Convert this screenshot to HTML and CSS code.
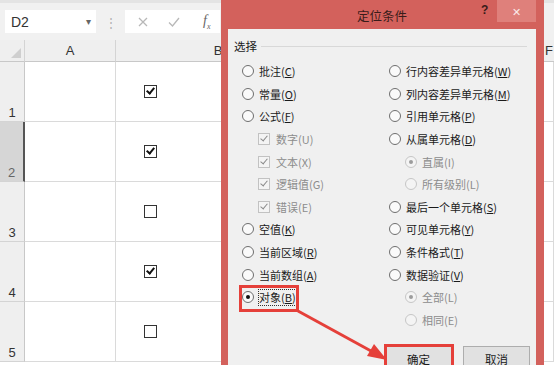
FILE: index.html
```html
<!DOCTYPE html>
<html lang="zh-CN">
<head>
    <meta charset="UTF-8">
    <title>定位条件</title>
    <link rel="stylesheet" href="styles.css">
</head>
<body>
    <div class="sheet">
      <div class="formula-bar">
        <div class="name-box"><span>D2</span><span class="caret">&#9662;</span></div>
        <div class="grip">&#8942;</div>
        <div class="fx-box">
          <svg width="12" height="12" viewBox="0 0 12 12"><path d="M2 2L10 10M10 2L2 10" stroke="#b8b8b8" stroke-width="1.3" fill="none"/></svg>
          <svg width="14" height="12" viewBox="0 0 14 12"><path d="M2 6.5L5.5 10L12 2" stroke="#b8b8b8" stroke-width="1.3" fill="none"/></svg>
          <span class="fx">f<sub>x</sub></span>
        </div>
      </div>

      <div class="grid">
        <div class="corner"><span class="tri"></span></div>
        <div class="col-head">A</div>
        <div class="col-head">B</div>
        <div class="col-head last">F</div>

        <div class="row-head">1</div><div class="cell"></div><div class="cell box-cell"><span class="cbx on"></span></div><div class="cell"></div>
        <div class="row-head sel">2</div><div class="cell"></div><div class="cell box-cell"><span class="cbx on"></span></div><div class="cell"></div>
        <div class="row-head">3</div><div class="cell"></div><div class="cell box-cell"><span class="cbx"></span></div><div class="cell"></div>
        <div class="row-head">4</div><div class="cell"></div><div class="cell box-cell"><span class="cbx on"></span></div><div class="cell"></div>
        <div class="row-head">5</div><div class="cell"></div><div class="cell box-cell"><span class="cbx"></span></div><div class="cell"></div>
      </div>
    </div>

    <div class="dialog">
      <div class="title-bar">
        <span class="title">定位条件</span>
        <span class="help">?</span>
        <span class="close">&#10005;</span>
      </div>
      <div class="dlg-body">
        <div class="legend"><span>选择</span><span class="rule"></span></div>

        <div class="options">
          <div class="opt"><span class="radio"></span><span>批注(<u>C</u>)</span></div>
          <div class="opt"><span class="radio"></span><span>行内容差异单元格(<u>W</u>)</span></div>

          <div class="opt"><span class="radio"></span><span>常量(<u>O</u>)</span></div>
          <div class="opt"><span class="radio"></span><span>列内容差异单元格(<u>M</u>)</span></div>

          <div class="opt"><span class="radio"></span><span>公式(<u>F</u>)</span></div>
          <div class="opt"><span class="radio"></span><span>引用单元格(<u>P</u>)</span></div>

          <div class="opt sub off"><span class="chk"></span><span>数字(U)</span></div>
          <div class="opt"><span class="radio"></span><span>从属单元格(<u>D</u>)</span></div>

          <div class="opt sub off"><span class="chk"></span><span>文本(X)</span></div>
          <div class="opt sub off"><span class="radio dot"></span><span>直属(I)</span></div>

          <div class="opt sub off"><span class="chk"></span><span>逻辑值(G)</span></div>
          <div class="opt sub off"><span class="radio"></span><span>所有级别(L)</span></div>

          <div class="opt sub off"><span class="chk"></span><span>错误(E)</span></div>
          <div class="opt"><span class="radio"></span><span>最后一个单元格(<u>S</u>)</span></div>

          <div class="opt"><span class="radio"></span><span>空值(<u>K</u>)</span></div>
          <div class="opt"><span class="radio"></span><span>可见单元格(<u>Y</u>)</span></div>

          <div class="opt"><span class="radio"></span><span>当前区域(<u>R</u>)</span></div>
          <div class="opt"><span class="radio"></span><span>条件格式(<u>T</u>)</span></div>

          <div class="opt"><span class="radio"></span><span>当前数组(<u>A</u>)</span></div>
          <div class="opt"><span class="radio"></span><span>数据验证(<u>V</u>)</span></div>

          <div class="opt"><span class="radio picked"></span><span class="focus">对象(<u>B</u>)</span></div>
          <div class="opt sub off"><span class="radio dot"></span><span>全部(L)</span></div>

          <div class="opt"></div>
          <div class="opt sub off"><span class="radio"></span><span>相同(E)</span></div>
        </div>

        <div class="buttons">
          <button class="btn">确定</button>
          <button class="btn">取消</button>
        </div>
      </div>
    </div>

    <!-- red annotation drawn over the screenshot -->
    <div class="mark mark-obj"></div>
    <div class="mark mark-ok"></div>
    <svg class="arrow" width="554" height="365" viewBox="0 0 554 365">
      <line x1="298" y1="311" x2="371" y2="351" stroke="#e5403a" stroke-width="3"/>
      <polygon points="387,360 367,356 374,344" fill="#e5403a"/>
    </svg>
</body>
</html>
```

FILE: styles.css
```css
body {
  margin: 0;
  width: 554px;
  height: 365px;
  overflow: hidden;
  position: relative;
  font-family: "Noto Sans CJK SC", "Liberation Sans", sans-serif;
  background: #fff;
}

/* ---- worksheet ---- */

.formula-bar {
  height: 40px;
  display: flex;
  align-items: center;
  background: #f1f1f1;
  border-top: 3px solid #e4e4e4;
  box-sizing: border-box;
  padding: 0 0 0 5px;
}

.name-box {
  width: 91px;
  height: 23px;
  background: #fff;
  display: flex;
  align-items: center;
  justify-content: space-between;
  padding: 0 5px 0 6px;
  box-sizing: border-box;
  font-family: "Liberation Sans", sans-serif;
  font-size: 14px;
  color: #333;
}

.caret {
  font-size: 10px;
  color: #666;
}

.grip {
  width: 29px;
  text-align: center;
  color: #b0b0b0;
  font-size: 12px;
}

.fx-box {
  width: 95px;
  height: 23px;
  background: #fff;
  display: flex;
  align-items: center;
  gap: 18px;
  padding-left: 12px;
  box-sizing: border-box;
}

.fx {
  font-family: "Liberation Serif", serif;
  font-style: italic;
  font-size: 14px;
  color: #666;
  margin-left: 4px;
}

.fx sub {
  font-size: 8px;
}

.grid {
  display: grid;
  grid-template-columns: 25px 91px 205px 1fr;
  grid-template-rows: 22px repeat(5, 60px);
}

.corner,
.col-head {
  background: #efefef;
  border-right: 1px solid #d4d4d4;
  border-bottom: 1px solid #c8c8c8;
  box-sizing: border-box;
}

.corner {
  position: relative;
}

.tri {
  position: absolute;
  right: 3px;
  bottom: 3px;
  width: 0;
  height: 0;
  border-left: 10px solid transparent;
  border-bottom: 10px solid #cfcfcf;
}

.col-head {
  font-family: "Liberation Sans", sans-serif;
  font-size: 13px;
  color: #333;
  display: flex;
  align-items: center;
  justify-content: center;
}

.col-head.last {
  justify-content: flex-end;
  padding-right: 1px;
  border-right: none;
}

.row-head {
  background: #efefef;
  border-right: 1px solid #c8c8c8;
  border-bottom: 1px solid #d4d4d4;
  box-sizing: border-box;
  display: flex;
  align-items: flex-end;
  justify-content: center;
  font-family: "Liberation Sans", sans-serif;
  font-size: 13px;
  color: #333;
  padding-bottom: 1px;
}

.row-head.sel {
  background: #d6d6d6;
  border-right: 2px solid #555;
  color: #666;
}

.cell {
  border-right: 1px solid #dadada;
  border-bottom: 1px solid #dadada;
  box-sizing: border-box;
}

.box-cell {
  display: flex;
  align-items: center;
  padding-left: 28px;
}

.cbx {
  width: 11px;
  height: 11px;
  border: 1px solid #333;
  background: #fff;
  position: relative;
}

.cbx.on::after {
  content: "";
  position: absolute;
  left: 3px;
  top: 0px;
  width: 3px;
  height: 6px;
  border-right: 2px solid #111;
  border-bottom: 2px solid #111;
  transform: rotate(40deg);
}

/* ---- dialog window ---- */

.dialog {
  position: absolute;
  left: 221px;
  top: 0;
  width: 323px;
  height: 380px;
  background: #d3615c;
  padding: 0 8px 0 7px;
  box-sizing: border-box;
  display: flex;
  flex-direction: column;
}

.title-bar {
  height: 29px;
  flex: none;
  position: relative;
  display: flex;
  align-items: center;
  justify-content: center;
}

.title {
  font-size: 12.5px;
  color: #3a1c1a;
  margin-top: 2px;
}

.help {
  position: absolute;
  left: 253px;
  top: 3px;
  font-family: "Liberation Sans", sans-serif;
  font-weight: bold;
  font-size: 12px;
  color: #3a1c1a;
}

.close {
  position: absolute;
  right: 0;
  top: 0;
  width: 39px;
  height: 22px;
  background: #df807b;
  color: #fbe9e8;
  font-size: 11px;
  display: flex;
  align-items: center;
  justify-content: center;
}

.dlg-body {
  flex: 1;
  background: #f0f0f0;
  padding: 10px 6px 0 6px;
  font-size: 11.5px;
  color: #1a1a1a;
}

.legend {
  display: flex;
  align-items: center;
  gap: 4px;
  height: 14px;
  line-height: 14px;
}

.rule {
  flex: 1;
  height: 1px;
  background: #d8d8d8;
  margin-right: 3px;
}

.options {
  display: grid;
  grid-template-columns: 147px 1fr;
  grid-auto-rows: 22.6px;
  margin: 7px 0 0 8px;
  font-size: 11px;
}

.opt {
  display: flex;
  align-items: center;
  gap: 5px;
  white-space: nowrap;
}

.opt.sub {
  padding-left: 16px;
}

.opt.off {
  color: #8c8c8c;
}

.radio {
  width: 10px;
  height: 10px;
  border-radius: 50%;
  border: 1px solid #6e6e6e;
  background: #fafafa;
  flex: none;
  position: relative;
}

.off .radio {
  border-color: #c6c6c6;
  background: #f4f4f4;
}

.radio.dot::after,
.radio.picked::after {
  content: "";
  position: absolute;
  left: 3px;
  top: 3px;
  width: 4px;
  height: 4px;
  border-radius: 50%;
  background: #9c9c9c;
}

.radio.picked::after {
  background: #111;
}

.chk {
  width: 10px;
  height: 10px;
  border: 1px solid #c2c2c2;
  background: #f4f4f4;
  flex: none;
  margin-right: 1px;
  position: relative;
}

.chk::after {
  content: "";
  position: absolute;
  left: 3px;
  top: 0;
  width: 3px;
  height: 6px;
  border-right: 1.5px solid #8a8a8a;
  border-bottom: 1.5px solid #8a8a8a;
  transform: rotate(40deg);
}

.focus {
  outline: 1px dotted #333;
  outline-offset: 0;
  line-height: 15px;
}

.buttons {
  display: flex;
  justify-content: flex-end;
  gap: 11px;
  margin-top: 15px;
  padding-right: 0;
}

.btn {
  width: 67px;
  height: 24px;
  border: 1px solid #adadad;
  background: #e1e1e1;
  font-family: inherit;
  font-size: 11.5px;
  color: #1a1a1a;
  padding: 2px 0 0;
}

/* ---- annotations ---- */

.mark {
  position: absolute;
  border: 3px solid #e5403a;
  box-sizing: border-box;
}

.mark-obj {
  left: 239px;
  top: 285px;
  width: 60px;
  height: 27px;
}

.mark-ok {
  left: 384px;
  top: 344px;
  width: 70px;
  height: 26px;
}

.arrow {
  position: absolute;
  left: 0;
  top: 0;
}
```
